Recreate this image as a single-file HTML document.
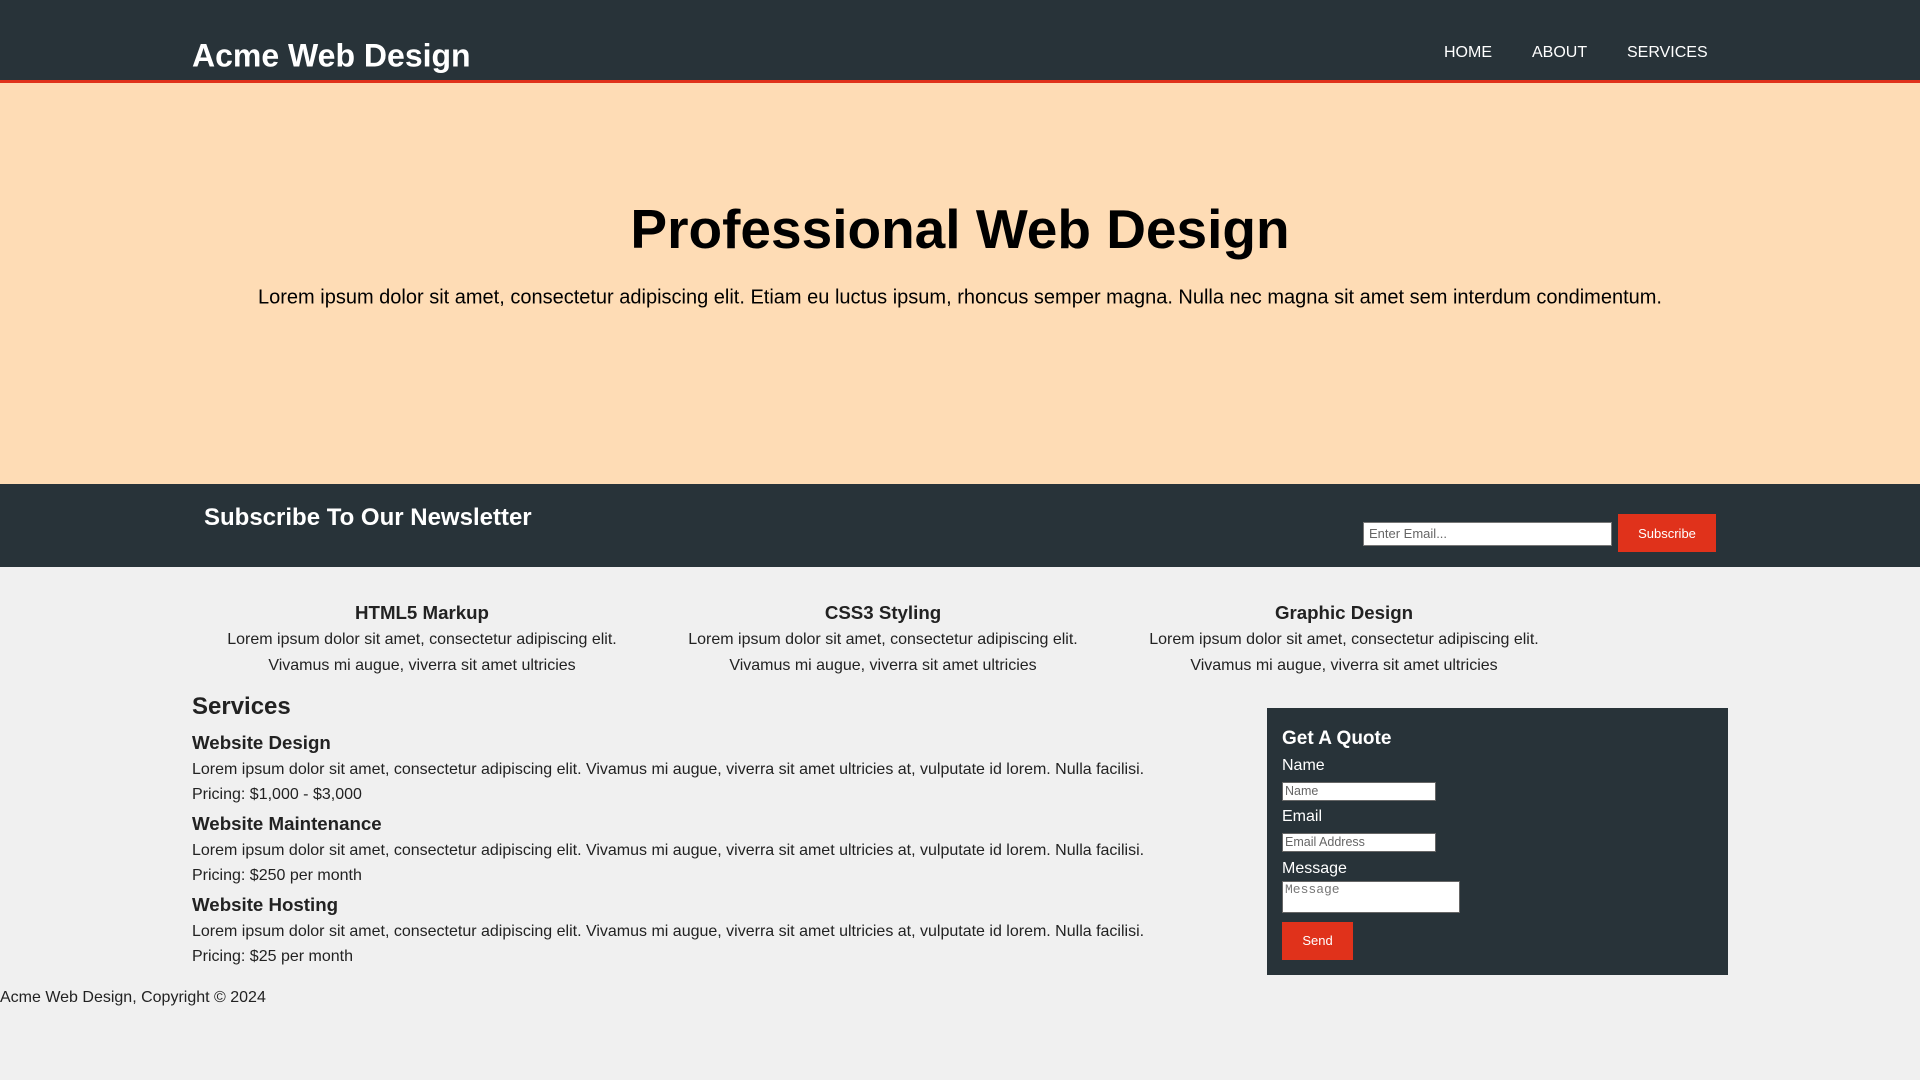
<!DOCTYPE html>
<html><head><meta charset="utf-8"><style>
*{box-sizing:border-box}
body{margin:0;width:1920px;height:1080px;background:#f0f0f0;font-family:"Liberation Sans",Arial,sans-serif;color:#222;position:relative;overflow:hidden}
.a{position:absolute;white-space:nowrap}
header{position:absolute;left:0;top:0;width:1920px;height:83px;background:#283339;border-bottom:3px solid #e0321b}
.hero{position:absolute;left:0;top:83px;width:1920px;height:401px;background:#fedcb5}
.news{position:absolute;left:0;top:484px;width:1920px;height:83px;background:#283339}
.w{color:#fff}
.c{transform:translate(-50%,-50%)}
.l{transform:translateY(-50%)}
</style></head><body>
<header></header>
<div class="a w l" style="left:192px;top:56px;font-size:32px;font-weight:bold">Acme Web Design</div>
<div class="a w l" style="left:1444px;top:53px;font-size:16px">HOME</div>
<div class="a w l" style="left:1532px;top:53px;font-size:16px">ABOUT</div>
<div class="a w l" style="left:1627px;top:53px;font-size:16px">SERVICES</div>
<div class="hero"></div>
<div class="a c" style="left:960px;top:229px;font-size:55px;font-weight:bold;color:#000">Professional Web Design</div>
<div class="a c" style="left:960px;top:298px;font-size:20px;color:#000">Lorem ipsum dolor sit amet, consectetur adipiscing elit. Etiam eu luctus ipsum, rhoncus semper magna. Nulla nec magna sit amet sem interdum condimentum.</div>
<div class="news"></div>
<div class="a w l" style="left:204px;top:518px;font-size:24px;font-weight:bold">Subscribe To Our Newsletter</div>
<div class="a" style="left:1363px;top:522px;width:249px;height:24px;background:#fff;border:1px solid #777;font-size:13px;color:#666;padding:3px 5px">Enter Email...</div>
<div class="a" style="left:1618px;top:514px;width:98px;height:38px;background:#e0321b;color:#fff;font-size:13px;text-align:center;line-height:39px">Subscribe</div>

<div class="a c" style="left:422px;top:613px;font-size:18.7px;font-weight:bold">HTML5 Markup</div>
<div class="a c" style="left:422px;top:640px;font-size:16px">Lorem ipsum dolor sit amet, consectetur adipiscing elit.</div>
<div class="a c" style="left:422px;top:666px;font-size:16px">Vivamus mi augue, viverra sit amet ultricies</div>
<div class="a c" style="left:883px;top:613px;font-size:18.7px;font-weight:bold">CSS3 Styling</div>
<div class="a c" style="left:883px;top:640px;font-size:16px">Lorem ipsum dolor sit amet, consectetur adipiscing elit.</div>
<div class="a c" style="left:883px;top:666px;font-size:16px">Vivamus mi augue, viverra sit amet ultricies</div>
<div class="a c" style="left:1344px;top:613px;font-size:18.7px;font-weight:bold">Graphic Design</div>
<div class="a c" style="left:1344px;top:640px;font-size:16px">Lorem ipsum dolor sit amet, consectetur adipiscing elit.</div>
<div class="a c" style="left:1344px;top:666px;font-size:16px">Vivamus mi augue, viverra sit amet ultricies</div>

<div class="a l" style="left:192px;top:707px;font-size:24px;font-weight:bold">Services</div>
<div class="a l" style="left:192px;top:743px;font-size:18.7px;font-weight:bold">Website Design</div>
<div class="a l" style="left:192px;top:770px;font-size:16px">Lorem ipsum dolor sit amet, consectetur adipiscing elit. Vivamus mi augue, viverra sit amet ultricies at, vulputate id lorem. Nulla facilisi.</div>
<div class="a l" style="left:192px;top:795px;font-size:16px">Pricing: $1,000 - $3,000</div>
<div class="a l" style="left:192px;top:824px;font-size:18.7px;font-weight:bold">Website Maintenance</div>
<div class="a l" style="left:192px;top:851px;font-size:16px">Lorem ipsum dolor sit amet, consectetur adipiscing elit. Vivamus mi augue, viverra sit amet ultricies at, vulputate id lorem. Nulla facilisi.</div>
<div class="a l" style="left:192px;top:876px;font-size:16px">Pricing: $250 per month</div>
<div class="a l" style="left:192px;top:905px;font-size:18.7px;font-weight:bold">Website Hosting</div>
<div class="a l" style="left:192px;top:932px;font-size:16px">Lorem ipsum dolor sit amet, consectetur adipiscing elit. Vivamus mi augue, viverra sit amet ultricies at, vulputate id lorem. Nulla facilisi.</div>
<div class="a l" style="left:192px;top:957px;font-size:16px">Pricing: $25 per month</div>

<div class="a" style="left:1267px;top:708px;width:461px;height:267px;background:#283339"></div>
<div class="a w l" style="left:1282px;top:739px;font-size:19px;font-weight:bold">Get A Quote</div>
<div class="a w l" style="left:1282px;top:766px;font-size:16px">Name</div>
<div class="a" style="left:1282px;top:782px;width:154px;height:19px;background:#fff;border:1px solid #666;font-size:12.5px;color:#666;padding:1px 2px;line-height:15px">Name</div>
<div class="a w l" style="left:1282px;top:817px;font-size:16px">Email</div>
<div class="a" style="left:1282px;top:833px;width:154px;height:19px;background:#fff;border:1px solid #666;font-size:12.5px;color:#666;padding:1px 2px;line-height:15px">Email Address</div>
<div class="a w l" style="left:1282px;top:869px;font-size:16px">Message</div>
<div class="a" style="left:1282px;top:881px;width:178px;height:32px;background:#fff;border:1px solid #666;font-size:13px;color:#777;padding:0 2px;font-family:'Liberation Mono',monospace">Message</div>
<div class="a" style="left:1282px;top:922px;width:71px;height:38px;background:#e0321b;color:#fff;font-size:13px;text-align:center;line-height:38px">Send</div>

<div class="a l" style="left:0;top:998px;font-size:16px">Acme Web Design, Copyright © 2024</div>
</body></html>
